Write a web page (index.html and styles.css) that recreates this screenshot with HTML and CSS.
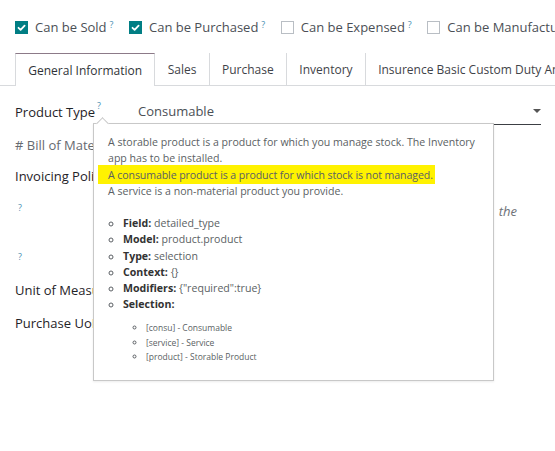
FILE: index.html
```html
<!DOCTYPE html>
<html>
<head>
<meta charset="utf-8">
<link rel="stylesheet" href="styles.css">
</head>
<body>
<div class="page">
  <div class="checks">
    <label class="chk"><span class="box on"><svg viewBox="0 0 13 13" width="13" height="13"><path d="M3.5 6.8 L5.6 8.8 L9.6 4.6" fill="none" stroke="#fff" stroke-width="1.8" stroke-linecap="round" stroke-linejoin="round"/></svg></span>Can be Sold<sup class="q">?</sup></label>
    <label class="chk"><span class="box on"><svg viewBox="0 0 13 13" width="13" height="13"><path d="M3.5 6.8 L5.6 8.8 L9.6 4.6" fill="none" stroke="#fff" stroke-width="1.8" stroke-linecap="round" stroke-linejoin="round"/></svg></span>Can be Purchased<sup class="q">?</sup></label>
    <label class="chk"><span class="box"></span>Can be Expensed<sup class="q">?</sup></label>
    <label class="chk"><span class="box"></span>Can be Manufactured</label>
  </div>

  <div class="tabs">
    <div class="tab active">General Information</div>
    <div class="tab">Sales</div>
    <div class="tab">Purchase</div>
    <div class="tab">Inventory</div>
    <div class="tab">Insurence Basic Custom Duty Amount</div>
  </div>

  <div class="form">
    <div class="row r1">
      <div class="lbl strong">Product Type<sup class="q">?</sup></div>
      <div class="val select">Consumable<span class="caret"></span></div>
    </div>
    <div class="row r2">
      <div class="lbl muted"># Bill of Materials</div>
    </div>
    <div class="row r3">
      <div class="lbl strong">Invoicing Policy</div>
    </div>
    <div class="row r4">
      <div class="lbl q small">?</div>
      <div class="val help">Ordered Quantity: Invoice quantities ordered by <span class="gap">the</span></div>
    </div>
    <div class="row r5">
      <div class="lbl q small">?</div>
    </div>
    <div class="row r6">
      <div class="lbl strong">Unit of Measure</div>
    </div>
    <div class="row r7">
      <div class="lbl strong">Purchase UoM</div>
    </div>
  </div>

  <div class="tooltip">
    <span class="arrow"></span>
    <p class="desc">A storable product is a product for which you manage stock. The Inventory app has to be installed.</p>
    <p class="desc"><span class="hl">A consumable product is a product for which stock is not managed.</span></p>
    <p class="desc">A service is a non-material product you provide.</p>
    <ul class="meta">
      <li><b>Field:</b> detailed_type</li>
      <li><b>Model:</b> product.product</li>
      <li><b>Type:</b> selection</li>
      <li><b>Context:</b> {}</li>
      <li><b>Modifiers:</b> {"required":true}</li>
      <li><b>Selection:</b>
        <ul class="sel">
          <li>[consu] - Consumable</li>
          <li>[service] - Service</li>
          <li>[product] - Storable Product</li>
        </ul>
      </li>
    </ul>
  </div>
</div>
</body>
</html>
```

FILE: styles.css
```css
html, body {
  margin: 0;
  padding: 0;
  background: #fff;
}
body {
  font-family: "Open Sans", "Noto Sans", sans-serif;
  color: #4a4a4a;
  width: 555px;
  height: 451px;
  overflow: hidden;
}
.page {
  position: relative;
  width: 555px;
  height: 451px;
  overflow: hidden;
}
.checks {
  display: flex;
  white-space: nowrap;
  padding: 17px 0 0 15px;
  height: 36px;
  box-sizing: border-box;
  font-size: 13px;
  color: #4b4f56;
}
.chk {
  display: flex;
  align-items: center;
  height: 20px;
  margin-right: 15.5px;
}
.box {
  width: 13px;
  height: 13px;
  box-sizing: border-box;
  border: 1px solid #b9bec4;
  background: #fff;
  margin-right: 7px;
  display: inline-flex;
  flex: none;
}
.box.on {
  background: #017e84;
  border-color: #017e84;
}
.box svg { margin: -1px; }
.q {
  color: #4a8fb3;
  font-size: 9px;
  margin-left: 3px;
  position: relative;
  top: -3px;
}
.tabs {
  display: flex;
  margin-top: 17px;
  padding-left: 15px;
  border-bottom: 1px solid #d8dadd;
  height: 33px;
  box-sizing: border-box;
  white-space: nowrap;
  font-size: 12px;
  color: #3f4349;
}
.tab {
  display: flex;
  align-items: center;
  padding: 0 12.3px;
  border-right: 1px solid #d8dadd;
  height: 32px;
  box-sizing: border-box;
}
.tab.active {
  border: 1px solid #d8dadd;
  border-top-color: #8c7a88;
  border-bottom: none;
  background: #fff;
  height: 33px;
  margin-bottom: -1px;
  color: #2f3338;
}
.form {
  padding: 16px 14px 0 15px;
  font-size: 13px;
}
.row {
  display: flex;
  align-items: flex-start;
  white-space: nowrap;
}
.lbl {
  width: 115px;
  flex: none;
}
.strong { color: #1f2327; font-weight: 500; }
.muted { color: #666a70; }
.lbl.q { position: static; font-size: 9px; margin-left: 3px; width: 112px; padding-top: 5px; }
.r1 { height: 34px; }
.r1 .lbl .q { font-size: 9px; top: -3px; margin-left: 2px; }
.r2 { height: 31px; }
.r3 { height: 29px; }
.r4 { height: 49px; }
.r5 { height: 36px; }
.r6 { height: 33px; }
.r7 { height: 30px; }
.select {
  position: relative;
  flex: 1;
  margin-left: 8px;
  padding-left: 0;
  height: 22px;
  border-bottom: 1px solid #3c3f44;
  color: #4b4f56;
  margin-right: 0;
}
.caret {
  position: absolute;
  right: 0;
  top: 7px;
  width: 0;
  height: 0;
  border-left: 4px solid transparent;
  border-right: 4px solid transparent;
  border-top: 4px solid #555;
}
.help {
  flex: 1;
  text-align: right;
  font-style: italic;
  color: #6e7278;
  padding-right: 24px;
  margin-top: 6px;
}
.gap { margin-left: 6px; }
.tooltip {
  position: absolute;
  left: 93px;
  top: 123px;
  width: 401px;
  height: 258px;
  box-sizing: border-box;
  border: 1px solid #c8c8c8;
  background: #fff;
  padding: 10px 14px 0 14px;
  font-size: 10.6px;
  color: #5b5f64;
  line-height: 16.3px;
  box-shadow: 0 1px 2px rgba(0,0,0,0.08);
}
.arrow {
  position: absolute;
  left: 4px;
  top: -5px;
  width: 8px;
  height: 8px;
  background: #fff;
  border-left: 1px solid #c8c8c8;
  border-top: 1px solid #c8c8c8;
  transform: rotate(45deg);
}
.desc { margin: 0; }
.hl {
  background: #fff200;
  box-shadow: -10px 0 0 #fff200, 2px 0 0 #fff200;
  padding: 3px 0 2px;
  letter-spacing: -0.1px;
}
.meta {
  list-style: circle;
  margin: 16px 0 0 0;
  padding-left: 15px;
}
.meta li { line-height: 16.2px; }
.meta b { color: #333; font-weight: 700; }
.sel {
  list-style: circle;
  margin: 9px 0 0 0;
  padding-left: 23px;
  font-size: 8.5px;
  line-height: 14.5px;
}
.sel li { line-height: 14.5px; }
```
